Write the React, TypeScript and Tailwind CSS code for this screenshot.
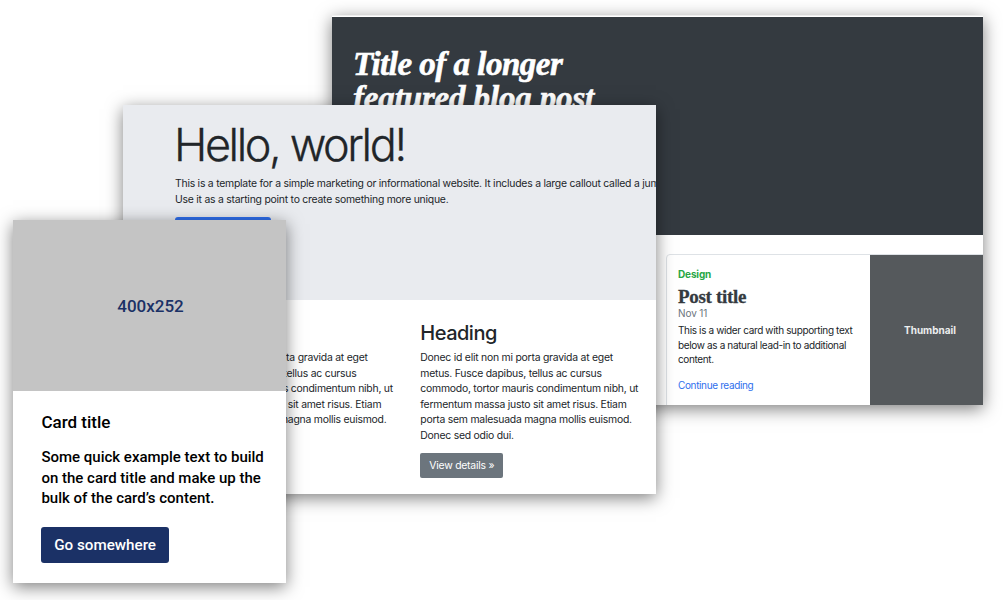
const donec = [
  "Donec id elit non mi porta gravida at eget",
  "metus. Fusce dapibus, tellus ac cursus",
  "commodo, tortor mauris condimentum nibh, ut",
  "fermentum massa justo sit amet risus. Etiam",
  "porta sem malesuada magna mollis euismod.",
  "Donec sed odio dui.",
];

function Lines({ items }: { items: string[] }) {
  return (
    <>
      {items.map((line) => (
        <span key={line} className="block">
          {line}
        </span>
      ))}
    </>
  );
}

function BlogWindow() {
  return (
    <section className="absolute left-[332px] top-[15px] h-[389.5px] w-[651px] overflow-hidden border-t border-[#eeeeee] bg-white shadow-[0_4px_16px_rgba(0,0,0,0.5)]">
      <div className="mt-px h-[218px] bg-[#343a40] pl-[21px] pt-[30px]">
        <h1 className="whitespace-nowrap font-['Liberation_Serif',serif] text-[33px] font-bold italic leading-[34px] text-white [-webkit-text-stroke:0.6px_white]">
          <span className="block tracking-[-0.5px]">Title of a longer</span>
          <span className="block tracking-[-0.15px]">featured blog post</span>
        </h1>
      </div>
      <div className="ml-[334px] mt-[19px] flex h-[160px] w-[360px] rounded-sm border border-[#dee2e6] font-[Inter,sans-serif] text-[10px] tracking-[-0.2px]">
        <div className="w-[203px] whitespace-nowrap pl-[11px] pt-[12px] text-[#212529]">
          <div className="font-bold leading-[15px] tracking-[-0.15px] text-[#28a745]">Design</div>
          <h2 className="mt-[4px] font-['Liberation_Serif',serif] text-[19px] font-bold leading-[22px] tracking-[-0.3px] text-[#343a40] [-webkit-text-stroke:0.3px_#343a40]">Post title</h2>
          <div className="mt-[-2px] leading-[15px] tracking-[-0.1px] text-[#6c757d]">Nov 11</div>
          <p className="mt-[2px] leading-[14.5px] tracking-[-0.36px]">
            <Lines items={["This is a wider card with supporting text", "below as a natural lead-in to additional", "content."]} />
          </p>
          <a className="mt-[11px] block leading-[15px] tracking-[-0.36px] text-[#2f6fed]">Continue reading</a>
        </div>
        <div className="flex h-[150px] w-[120px] items-center justify-center bg-[#55595c] font-bold tracking-[0] text-[#eceeef]">
          Thumbnail
        </div>
      </div>
    </section>
  );
}

function JumbotronWindow() {
  return (
    <section className="absolute left-[123px] top-[105px] h-[389px] w-[532.6px] overflow-hidden bg-white font-[Inter,sans-serif] text-[10.4px] leading-[15.5px] tracking-[-0.23px] text-[#212529] shadow-[0_4px_16px_rgba(0,0,0,0.5)]">
      <div className="h-[194.5px] whitespace-nowrap bg-[#e9ebef] pl-[52px] pt-[14px]">
        <h1 className="ml-[-1px] text-[45px] font-light leading-[52px] tracking-[-2.4px] [-webkit-text-stroke:0.3px_#212529]">Hello, world!</h1>
        <p className="mt-[5px]">
          <Lines items={["This is a template for a simple marketing or informational website. It includes a large callout called a jumbotron", "Use it as a starting point to create something more unique."]} />
        </p>
        <div className="mt-[10px] h-[30px] w-[96px] rounded-[3px] bg-[#2f6fed]" />
      </div>
      <div className="flex whitespace-nowrap pl-[52px] pt-[20px]">
        {[0, 1].map((column) => (
          <article key={column} className="w-[245.3px] shrink-0">
            <h2 className="text-[20px] font-medium leading-[27px] tracking-[-0.5px]">Heading</h2>
            <p className="mt-[3.5px]">
              <Lines items={donec} />
            </p>
            {column === 1 && (
              <span className="mt-[10px] flex h-[25px] w-[83px] items-center justify-center rounded-[2px] bg-[#6c757d] text-white">
                View details »
              </span>
            )}
          </article>
        ))}
      </div>
    </section>
  );
}

function CardWindow() {
  return (
    <section className="absolute left-[13px] top-[220px] h-[363px] w-[273px] overflow-hidden bg-white font-[Roboto,sans-serif] font-medium text-black shadow-[0_4px_16px_rgba(0,0,0,0.5)]">
      <div className="flex h-[171.4px] items-center justify-center bg-[#c4c4c4] pl-[2px] pt-[2px] text-[17px] text-[#1b3166]">400x252</div>
      <div className="whitespace-nowrap pl-[28.4px] pt-[18.7px]">
        <h2 className="text-[17px] leading-[24px]">Card title</h2>
        <p className="mt-[13px] text-[15px] leading-[20.5px]">
          <Lines items={["Some quick example text to build", "on the card title and make up the", "bulk of the card’s content."]} />
        </p>
        <button className="mt-[18px] flex h-[36px] w-[127.5px] items-center justify-center rounded-[3px] bg-[#1b3166] pt-px text-[15.2px] text-white">
          Go somewhere
        </button>
      </div>
    </section>
  );
}

export default function App() {
  return (
    <main className="relative h-[600px] w-[1003px] overflow-hidden bg-white">
      <BlogWindow />
      <JumbotronWindow />
      <CardWindow />
    </main>
  );
}
